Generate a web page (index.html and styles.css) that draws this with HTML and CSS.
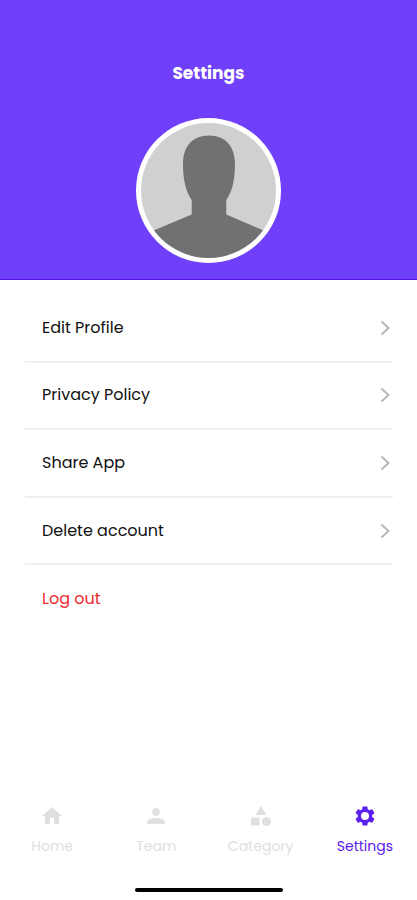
FILE: index.html
```html
<!DOCTYPE html>
<html lang="en">
<head>
<meta charset="utf-8">
<meta name="viewport" content="width=device-width, initial-scale=1">
<title>Settings</title>
<link rel="stylesheet" href="styles.css">
</head>
<body>
<header class="hero">
  <h1 class="title">Settings</h1>
  <svg class="avatar" viewBox="0 0 145 145" role="img" aria-label="Profile picture">
    <defs><clipPath id="disc"><circle cx="72.5" cy="72.5" r="67.5"/></clipPath></defs>
    <circle cx="72.5" cy="72.5" r="72.5" fill="#fff"/>
    <g clip-path="url(#disc)">
      <rect width="145" height="145" fill="#d0d0d0"/>
      <path fill="#6f7172" d="M73 17.5C56 17.5 47 29 47 46C47 62 50 74 55.700 82V96.500L14 114V145H131V114L90.300 96.500V82C96 74 99 62 99 46C99 29 90 17.500 73 17.500Z"/>
    </g>
  </svg>
</header>
<main class="content">
  <ul class="list">
    <li class="item"><a class="row" href="#">Edit Profile<svg class="chevron" viewBox="0 0 10 16" aria-hidden="true"><path d="M1.500 1.500L8.500 8L1.500 14.500"/></svg></a></li>
    <li class="item"><a class="row" href="#">Privacy Policy<svg class="chevron" viewBox="0 0 10 16" aria-hidden="true"><path d="M1.500 1.500L8.500 8L1.500 14.500"/></svg></a></li>
    <li class="item"><a class="row" href="#">Share App<svg class="chevron" viewBox="0 0 10 16" aria-hidden="true"><path d="M1.500 1.500L8.500 8L1.500 14.500"/></svg></a></li>
    <li class="item"><a class="row" href="#">Delete account<svg class="chevron" viewBox="0 0 10 16" aria-hidden="true"><path d="M1.500 1.500L8.500 8L1.500 14.500"/></svg></a></li>
    <li class="item"><button class="row logout" type="button">Log out</button></li>
  </ul>
</main>
<footer class="footer">
  <nav class="tabs">
    <a class="tab" href="#"><svg class="icon" viewBox="0 0 24 24" aria-hidden="true"><path d="M10 20v-6h4v6h5v-8h3L12 3 2 12h3v8z"/></svg>Home</a>
    <a class="tab" href="#"><svg class="icon" viewBox="0 0 24 24" aria-hidden="true"><path d="M12 12c2.210 0 4-1.790 4-4s-1.790-4-4-4-4 1.790-4 4 1.790 4 4 4zm0 2c-2.670 0-9 1.340-9 4v2h18v-2c0-2.660-6.330-4-9-4z"/></svg>Team</a>
    <a class="tab" href="#"><svg class="icon" viewBox="0 0 24 24" aria-hidden="true"><path d="M12 2l-5.500 9h11z"/><circle cx="17.500" cy="17.500" r="4.500"/><path d="M2 13.500h8.500v8H2z"/></svg>Category</a>
    <a class="tab active" href="#" aria-current="page"><svg class="icon" viewBox="0 0 24 24" aria-hidden="true"><path fill-rule="evenodd" d="M19.140 12.940c.04-.3.060-.61.060-.94s-.02-.64-.07-.94l2.030-1.580a.49.49 0 0 0 .12-.61l-1.920-3.320a.49.49 0 0 0-.59-.22l-2.390.96a7 7 0 0 0-1.620-.94L14.400 2.810A.48.48 0 0 0 13.920 2.400h-3.840a.47.47 0 0 0-.47.41L9.250 5.350a7 7 0 0 0-1.620.94l-2.390-.96a.48.48 0 0 0-.59.22L2.740 8.870a.47.47 0 0 0 .12.610l2.030 1.580a6 6 0 0 0-.02 1.880l-2.030 1.580a.49.49 0 0 0-.12.610l1.920 3.320c.12.220.37.290.59.220l2.390-.96c.5.380 1.030.7 1.620.94l.36 2.540c.05.240.24.410.48.410h3.840c.24 0 .44-.17.470-.41l.36-2.540a7 7 0 0 0 1.620-.94l2.390.96c.22.080.47 0 .59-.22l1.920-3.320a.47.47 0 0 0-.12-.61zM12 16a4 4 0 1 1 0-8 4 4 0 0 1 0 8z"/></svg>Settings</a>
  </nav>
  <div class="indicator"></div>
</footer>
</body>
</html>
```
FILE: styles.css
```css
* {
  box-sizing: border-box;
}

body {
  margin: 0;
  min-height: 100vh;
  display: flex;
  flex-direction: column;
  background: #fff;
  color: #111;
  font-family: Poppins, Inter, sans-serif;
  font-size: 16px;
  line-height: 24px;
}

a {
  color: inherit;
  text-decoration: none;
}

.hero {
  display: flex;
  flex-direction: column;
  align-items: center;
  gap: 33px;
  padding: 61px 24px 16px;
  background: #703ff9;
  border-bottom: 1px solid #5713e6;
}

.title {
  margin: 0;
  color: #fff;
  font-size: 17px;
  font-weight: 700;
  line-height: 24px;
}

.avatar {
  width: 145px;
  height: 145px;
}

.content {
  flex: 1;
  padding: 15px 24px 0 25px;
}

.list {
  height: 338px;
  margin: 0;
  padding: 0;
  display: grid;
  grid-template-rows: repeat(5, 1fr);
  list-style: none;
}

.item {
  display: flex;
  border-bottom: 2px solid #f0f0f0;
}

.item:last-child {
  border-bottom: 0;
}

.row {
  flex: 1;
  display: flex;
  align-items: center;
  justify-content: space-between;
  padding: 0 3px 0 17px;
}

.logout {
  border: 0;
  background: none;
  color: #ee2b2f;
  font: inherit;
  text-align: left;
}

.chevron {
  width: 10px;
  height: 16px;
  fill: none;
  stroke: #b8b8b8;
  stroke-width: 2;
}

.footer {
  padding-bottom: 8px;
  border-top: 1px solid #fcfcfc;
}

.tabs {
  display: grid;
  grid-template-columns: repeat(4, 1fr);
  padding: 9px 0 32px;
}

.tab {
  display: flex;
  flex-direction: column;
  align-items: center;
  gap: 8px;
  color: #e0e0e0;
  font-size: 14px;
  line-height: 20px;
}

.active {
  color: #5a20ee;
}

.icon {
  width: 24px;
  height: 24px;
  fill: currentColor;
}

.indicator {
  width: 148px;
  height: 4px;
  margin: 0 auto;
  border-radius: 2px;
  background: #000;
}
```
